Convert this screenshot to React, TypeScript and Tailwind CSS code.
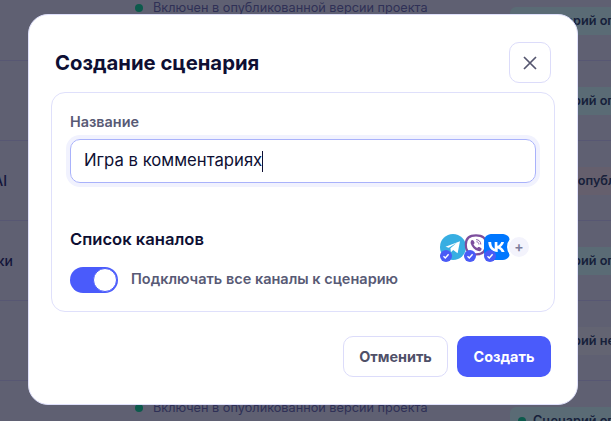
const font = { fontFamily: 'Inter, "Noto Sans", sans-serif' }

const rows = [
  { left: '', leftClass: 'w-0', status: 'Сценарий опубликован', tone: 'bg-[#5a6b75]', note: true },
  { left: '', leftClass: 'w-0', status: 'Сценарий опубликован', tone: 'bg-[#5a6b75]', note: false },
  { left: 'Ассистент AI', leftClass: 'w-[7px]', status: 'Нет на опубликованной', tone: 'bg-[#655f6d]', note: false },
  { left: 'Подсказки', leftClass: 'w-[13px]', status: 'Сценарий опубликован', tone: 'bg-[#5a6b75]', note: false },
  { left: '', leftClass: 'w-0', status: 'Сценарий не опубликован', tone: 'bg-[#636472]', note: false },
  { left: '', leftClass: 'w-0', status: 'Сценарий опубликован', tone: 'bg-[#5a6b75]', note: true },
]

function BackgroundRow({ left, leftClass, status, tone, note }: (typeof rows)[number]) {
  return (
    <div className="flex h-20 shrink-0 items-center overflow-hidden border-b border-[#575773]">
      <div className="flex w-[510px] shrink-0 items-center">
        <div className="w-[135px] shrink-0">
          <span className={`flex justify-end text-[14px] leading-5 font-medium whitespace-nowrap text-[#14153a] ${leftClass}`}>
            {left}
          </span>
        </div>
        {note ? (
          <span className="mt-[-26px] flex items-center gap-[10px] text-[12.7px] leading-4 whitespace-nowrap text-[#2f3056]">
            <span className="h-2 w-2 rounded-full bg-[#0c5a4c]" />
            Включен в опубликованной версии проекта
          </span>
        ) : null}
      </div>
      <span
        className={`flex h-7 shrink-0 items-center gap-[7px] rounded-md px-2 text-[12.7px] font-semibold whitespace-nowrap text-[#16203a] ${tone}`}
      >
        <span className="h-2 w-2 shrink-0 rounded-full bg-[#0c5a4c]" />
        {status}
      </span>
    </div>
  )
}

function TelegramIcon() {
  return (
    <svg viewBox="0 0 26 26" className="h-[26px] w-[26px]">
      <circle cx="13" cy="13" r="13" fill="#37aee2" />
      <path d="M5.5 12.8 20 7.2l-2.4 12-4.4-3.2-2.3 2.2-.5-3.9 6.4-5.6-8 5z" fill="#fff" />
    </svg>
  )
}

function ViberIcon() {
  return (
    <svg viewBox="0 0 26 26" className="h-[26px] w-[26px]">
      <path
        d="M12 1.4c6.4 0 10 2.2 10 9.4 0 7-3.4 9.600-9.800 9.600h-1.500l-3.500 3.800v-4.600C3.300 18.400 1.800 16 1.800 10.800 1.800 3.600 5.600 1.400 12 1.400z"
        fill="#fff"
        stroke="#7d4e9d"
        strokeWidth="2.2"
      />
      <path
        d="M7.500 6.200c.8-.5 1.500-.2 1.900.4l1 1.600c.3.500.2 1.100-.2 1.500l-.7.600c.8 1.800 2 3 3.700 3.800l.7-.8c.4-.4 1-.5 1.500-.2l1.600 1c.6.400.8 1.100.3 1.900-.7 1.100-1.800 1.500-3 1.100-3.800-1.300-6.400-3.900-7.600-7.700-.3-1.100.1-2.100.8-3.200z"
        fill="#7d4e9d"
      />
      <path d="M12.500 5.600c2.500.2 4.200 2 4.300 4.500M12.800 7.800c1.300.1 2 1 2.100 2.300" fill="none" stroke="#7d4e9d" strokeWidth=".9" strokeLinecap="round" />
    </svg>
  )
}

function VkIcon() {
  return (
    <svg viewBox="0 0 26 26" className="h-[26px] w-[26px]">
      <path
        d="M9 0h8c6.500 0 9 2.500 9 9v8c0 6.500-2.500 9-9 9H9c-6.500 0-9-2.500-9-9V9c0-6.500 2.500-9 9-9z"
        fill="#0077ff"
      />
      <path
        d="M4.300 8h2.900c.1 4.400 2 6.300 3.500 6.700V8h2.700v3.800c1.600-.2 3.300-1.900 3.900-3.800H20c-.5 2.400-2.300 4.100-3.500 4.900 1.300.6 3.300 2.200 4.100 5.100h-3c-.6-1.900-2.200-3.400-3.900-3.600V18h-.3C8.500 18 4.500 14.300 4.300 8z"
        fill="#fff"
      />
    </svg>
  )
}

function CheckBadge() {
  return (
    <span className="absolute bottom-[-2px] left-0 flex h-[12px] w-[12px] items-center justify-center rounded-full bg-[#4a5bf6]">
      <svg viewBox="0 0 10 10" className="h-[10px] w-[10px]" fill="none" stroke="#fff" strokeWidth="1.4">
        <path d="M2.500 5.200 4.300 7l3.300-3.800" />
      </svg>
    </span>
  )
}

export default function App() {
  return (
    <div className="relative h-[421px] w-[611px] overflow-hidden bg-[#5f6072]" style={font}>
      <div className="mt-[-19px] flex flex-col">
        {rows.map((row, i) => (
          <BackgroundRow key={i} {...row} />
        ))}
      </div>

      <div className="absolute top-[14px] left-[28px] flex h-[391px] w-[550px] flex-col rounded-[20px] border border-[#dfe0fb] bg-white px-[22px] pt-[27px]">
        <div className="flex h-[41px] items-center justify-between pr-[4px] pl-[4px]">
          <h2 className="text-[20.3px] leading-7 font-bold text-[#0e0f33]">Создание сценария</h2>
          <button className="flex h-[41px] w-[42px] items-center justify-center rounded-[10px] border border-[#dcdcfa] text-[#55566f]">
            <svg viewBox="0 0 16 16" className="h-4 w-4" fill="none" stroke="currentColor" strokeWidth="1.7">
              <path d="M2 2l12 12M14 2 2 14" />
            </svg>
          </button>
        </div>

        <div className="mt-[9px] h-[220px] rounded-[14px] border border-[#dfe0fb] px-[18px] pt-[20px]">
          <div className="text-[14.4px] leading-[18px] font-semibold text-[#585a75]">Название</div>
          <div className="mt-[8px] flex h-[44px] items-center rounded-[10px] border border-[#a9b2fb] px-[13px] text-[16.7px] text-[#0e0f33] shadow-[0_0_0_4px_#f1f2fe]">
            Игра в комментариях
            <span className="h-[21px] w-px bg-[#0e0f33]" />
          </div>

          <div className="mt-[44px] flex items-start justify-between">
            <div>
              <div className="text-[16.6px] leading-6 font-semibold text-[#0e0f33]">Список каналов</div>
              <div className="mt-[16px] flex items-center gap-[13px]">
                <span className="flex h-[26px] w-[48px] items-center justify-end rounded-full bg-[#4a5bfb] pr-[1px]">
                  <span className="h-[24px] w-[24px] rounded-full border border-[#4a5bfb] bg-white" />
                </span>
                <span className="mb-[3px] text-[14.5px] leading-5 font-semibold text-[#585a75]">
                  Подключать все каналы к сценарию
                </span>
              </div>
            </div>
            <div className="mt-[7px] mr-[5px] flex items-center">
              <span className="relative">
                <TelegramIcon />
                <CheckBadge />
              </span>
              <span className="relative ml-[-2px]">
                <ViberIcon />
                <CheckBadge />
              </span>
              <span className="relative ml-[-6px]">
                <VkIcon />
                <CheckBadge />
              </span>
              <span className="relative ml-[-3px] flex h-[24px] w-[24px] items-center justify-center rounded-full border-2 border-white bg-[#f3f3fc] text-[14px] leading-none font-semibold text-[#7b7c9b]">
                +
              </span>
            </div>
          </div>
        </div>

        <div className="mt-[24px] flex justify-end gap-[9px] pr-[4px]">
          <button className="flex h-[41px] w-[105px] items-center justify-center rounded-[10px] border border-[#dcdcfa] text-[14.4px] font-bold text-[#4f5068]">
            Отменить
          </button>
          <button className="flex h-[41px] w-[94px] items-center justify-center rounded-[10px] bg-[#4a5bfb] text-[14.4px] font-bold text-white">
            Создать
          </button>
        </div>
      </div>
    </div>
  )
}
